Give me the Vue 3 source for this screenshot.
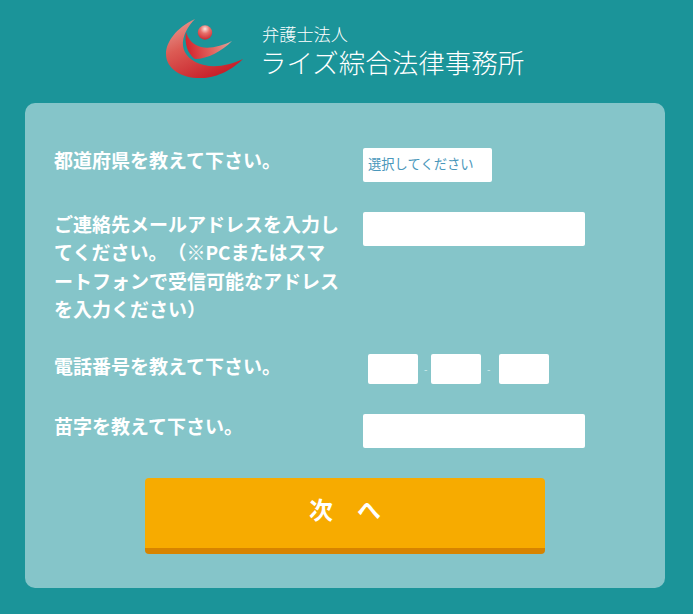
<template>
  <div class="page">
    <header class="logo">
      <svg class="logo-mark" width="78" height="62" viewBox="0 0 78 62">
        <defs>
          <linearGradient id="outerGrad" x1="0" y1="0" x2="0.6" y2="1">
            <stop offset="0" stop-color="#e9a39b" />
            <stop offset="0.45" stop-color="#dc5b54" />
            <stop offset="1" stop-color="#c71f29" />
          </linearGradient>
          <linearGradient id="wingGrad" x1="0" y1="0.5" x2="1" y2="0.4">
            <stop offset="0" stop-color="#d3222c" />
            <stop offset="0.55" stop-color="#e2655f" />
            <stop offset="1" stop-color="#dca59c" />
          </linearGradient>
          <radialGradient id="ballGrad" cx="0.5" cy="0.25" r="0.8">
            <stop offset="0" stop-color="#fbe6e0" />
            <stop offset="0.4" stop-color="#e8706a" />
            <stop offset="1" stop-color="#c9212b" />
          </radialGradient>
        </defs>
        <path d="M29 1C10 10 0 24 0 36C0 52 18 61 36 60C52 60 68 50 77 41C64 47 50 50 38 47C25 44 18 36 17 28C16 18 22 8 29 1Z" fill="url(#outerGrad)" />
        <path d="M20 14C18 26 22 36 29 41C42 41 56 33 66 23C56 28 44 31 35 29C27 27 22 21 20 14Z" fill="url(#wingGrad)" />
        <circle cx="39" cy="14.5" r="7.2" fill="url(#ballGrad)" />
      </svg>
      <div class="logo-text">
        <div class="logo-sub">弁護士法人</div>
        <div class="logo-name">ライズ綜合法律事務所</div>
      </div>
    </header>

    <main class="panel">
      <div class="row">
        <label class="row-label">都道府県を教えて下さい。</label>
        <select class="select">
          <option>選択してください</option>
        </select>
      </div>
      <div class="row">
        <label class="row-label">ご連絡先メールアドレスを入力してください。（※PCまたはスマートフォンで受信可能なアドレスを入力ください）</label>
        <input class="input" type="text" />
      </div>
      <div class="row">
        <label class="row-label">電話番号を教えて下さい。</label>
        <div class="tel">
          <input class="tel-input" type="text" />
          <span class="dash">-</span>
          <input class="tel-input" type="text" />
          <span class="dash dash-wide">-</span>
          <input class="tel-input" type="text" />
        </div>
      </div>
      <div class="row">
        <label class="row-label">苗字を教えて下さい。</label>
        <input class="input" type="text" />
      </div>
      <button class="next" type="button">次　へ</button>
    </main>
  </div>
</template>

<script setup>
</script>

<style>
html,
body {
  margin: 0;
  background: #1b9499;
}
</style>

<style scoped>
.page {
  width: 693px;
  height: 614px;
  box-sizing: border-box;
  padding: 18px 28px 26px 25px;
  background: #1b9499;
  font-family: "Noto Sans CJK JP", "Liberation Sans", sans-serif;
}

.logo {
  display: flex;
  align-items: flex-start;
  height: 85px;
  padding-left: 141px;
}

.logo-mark {
  flex: none;
}

.logo-text {
  margin-left: 16px;
  color: #fff;
  font-weight: 300;
}

.logo-sub {
  margin: 5px 0 0 2px;
  font-size: 17.2px;
  line-height: 21px;
}

.logo-name {
  margin-top: 2px;
  font-size: 26.5px;
  line-height: 32px;
  white-space: nowrap;
}

.panel {
  display: flex;
  flex-direction: column;
  gap: 30px;
  box-sizing: border-box;
  height: 485px;
  padding: 45px 30px 34px;
  background: #85c5c9;
  border-radius: 10px;
}

.row {
  display: flex;
  align-items: flex-start;
}

.row-label {
  flex: none;
  width: 288px;
  margin: -2px 21px 1px -1px;
  color: #fff;
  font-size: 19px;
  font-weight: 700;
  line-height: 28.33px;
  text-spacing-trim: space-all;
}

.select {
  width: 129px;
  height: 34px;
  padding: 0 5px 3px;
  border: none;
  border-radius: 2px;
  appearance: none;
  background: #fff;
  color: #4a97bb;
  font-family: inherit;
  font-size: 13.3px;
}

.input {
  width: 222px;
  height: 34px;
  box-sizing: border-box;
  border: none;
  border-radius: 2px;
  background: #fff;
}

.tel {
  display: flex;
  align-items: center;
  padding-left: 5px;
}

.tel-input {
  width: 50px;
  height: 30px;
  box-sizing: border-box;
  border: none;
  border-radius: 2px;
  background: #fff;
}

.dash {
  width: 13px;
  box-sizing: border-box;
  padding-left: 6px;
  color: #d4f0f0;
  font-size: 10px;
  line-height: 12px;
}

.dash-wide {
  width: 18px;
}

.next {
  align-self: center;
  width: 400px;
  height: 76px;
  padding: 0 0 10px;
  border: none;
  border-bottom: 6px solid #d78400;
  border-radius: 4px;
  background: #f7ab00;
  color: #fff;
  font-family: inherit;
  font-size: 24px;
  font-weight: 700;
}
</style>
